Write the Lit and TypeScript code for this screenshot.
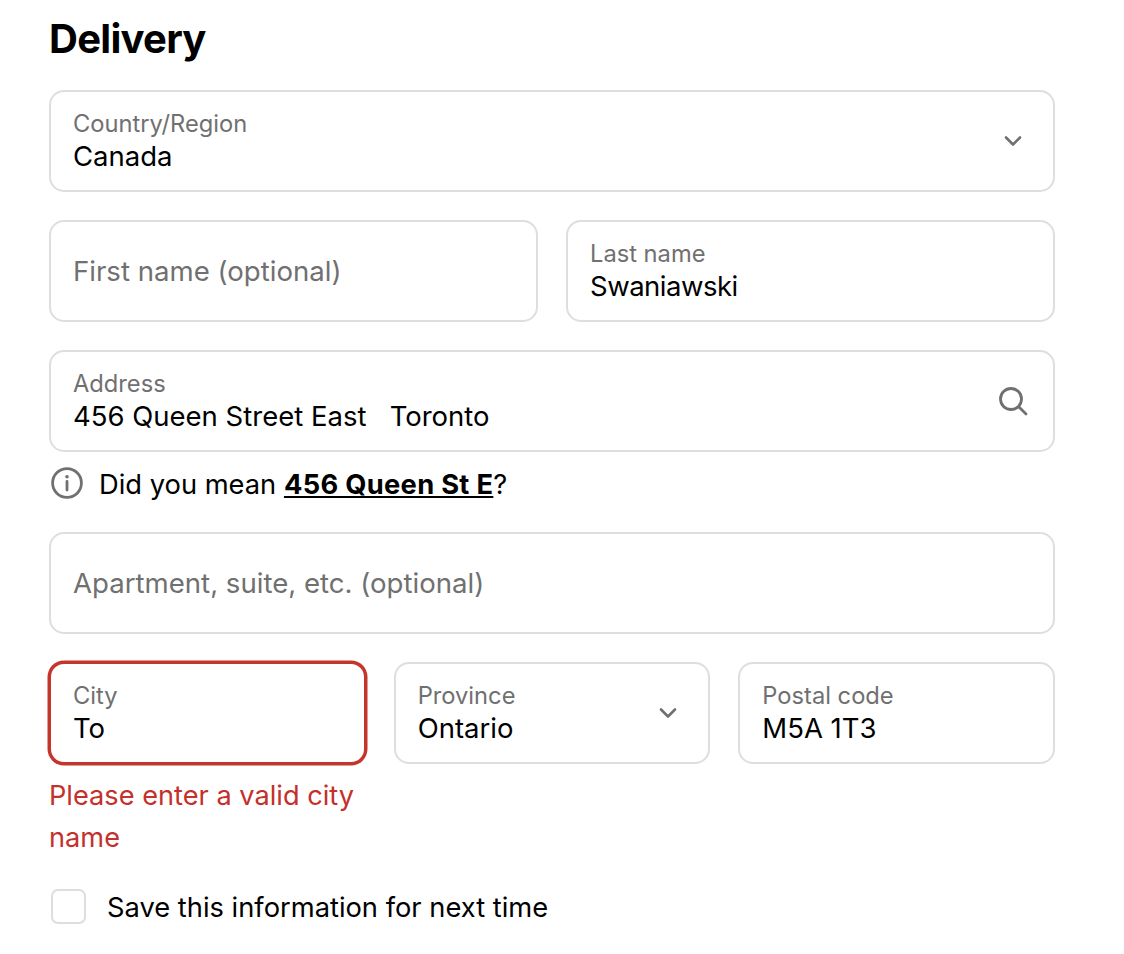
import { LitElement, html, css } from "lit";
import { customElement, property } from "lit/decorators.js";

const chevron = html`<svg class="icon chevron" viewBox="0 0 20 12" fill="none">
	<path d="M3 2.5l7 7 7-7" stroke="#707070" stroke-width="2.6" stroke-linecap="round" stroke-linejoin="round" />
</svg>`;

const search = html`<svg class="icon search" viewBox="0 0 30 30" fill="none">
	<circle cx="13" cy="13" r="10.5" stroke="#707070" stroke-width="2.8" />
	<path d="M21 21l7 7" stroke="#707070" stroke-width="2.8" stroke-linecap="round" />
</svg>`;

@customElement("text-field")
export class TextField extends LitElement {
	@property() label = "";
	@property() value = "";
	@property({ type: Boolean }) error = false;
	@property({ type: Boolean }) tight = false;

	static styles = css`
		:host {
			display: block;
			min-width: 0;
		}

		.box {
			box-sizing: border-box;
			height: 102px;
			border: 2px solid #dedede;
			border-radius: 15px;
			padding: 0 22px;
			display: flex;
			align-items: center;
			justify-content: space-between;
			background: #fff;
		}

		.box.error {
			border-color: #c4362b;
			box-shadow: 0 0 0 1.5px #c4362b;
		}

		.text {
			display: flex;
			flex-direction: column;
			padding-bottom: 2px;
		}

		.label {
			font-size: 23.7px;
			line-height: 33px;
			color: #707070;
		}

		.value {
			font-size: 27.5px;
			line-height: 33px;
			color: #000;
			white-space: pre;
		}

		.value.tight {
			letter-spacing: -0.5px;
		}

		.placeholder {
			font-size: 27.6px;
			line-height: 33px;
			color: #707070;
		}
	`;

	render() {
		return html`
			<div class="box ${this.error ? "error" : ""}">
				${this.value
					? html`<div class="text">
							<span class="label">${this.label}</span>
							<span class="value ${this.tight ? "tight" : ""}">${this.value}</span>
						</div>`
					: html`<span class="placeholder">${this.label}</span>`}
				<slot></slot>
			</div>
		`;
	}
}

@customElement("app-root")
export class AppRoot extends LitElement {
	static styles = css`
		:host {
			display: block;
			box-sizing: border-box;
			width: 1124px;
			height: 954px;
			padding: 13px 69px 0 49px;
			background: #fff;
			color: #000;
			font-family: Inter, "Liberation Sans", sans-serif;
		}

		h2 {
			margin: 0 0 25px;
			font-size: 40px;
			line-height: 52px;
			font-weight: 700;
			letter-spacing: -0.72px;
		}

		.form {
			display: flex;
			flex-direction: column;
			gap: 28px;
		}

		.row {
			display: grid;
			gap: 28px;
		}

		.two {
			grid-template-columns: 1fr 1fr;
		}

		.three {
			grid-template-columns: 1fr 1fr 1fr;
		}

		.with-hint {
			display: flex;
			flex-direction: column;
			gap: 13px;
		}

		.hint {
			display: flex;
			align-items: center;
			gap: 15px;
			padding: 0 0 1px 1px;
			font-size: 27.3px;
			line-height: 36px;
		}

		.hint span {
			padding-top: 2px;
		}

		.hint a {
			color: #000;
			font-weight: 700;
			letter-spacing: 0.3px;
			text-decoration: underline;
		}

		.icon {
			display: block;
			flex: none;
		}

		.chevron {
			width: 20px;
			height: 12px;
			margin-right: 8px;
		}

		.search {
			width: 30px;
			height: 30px;
			margin-right: 3px;
		}

		.info {
			width: 34px;
			height: 34px;
			margin-bottom: 2px;
		}

		.city {
			display: flex;
			flex-direction: column;
			gap: 11px;
		}

		.message {
			font-size: 27.2px;
			line-height: 42px;
			color: #c4302b;
		}

		.save {
			display: flex;
			align-items: center;
			gap: 21px;
			padding-left: 2px;
			font-size: 27.3px;
			line-height: 36px;
			margin-top: 2px;
		}

		.check {
			box-sizing: border-box;
			width: 35px;
			height: 35px;
			margin-bottom: 2px;
			border: 2px solid #dedede;
			border-radius: 7px;
			background: #fff;
		}
	`;

	render() {
		return html`
			<h2>Delivery</h2>
			<div class="form">
				<text-field label="Country/Region" value="Canada">${chevron}</text-field>
				<div class="row two">
					<text-field label="First name (optional)"></text-field>
					<text-field label="Last name" value="Swaniawski" tight></text-field>
				</div>
				<div class="with-hint">
					<text-field label="Address" value="456 Queen Street East   Toronto">${search}</text-field>
					<div class="hint">
						<svg class="icon info" viewBox="0 0 34 34" fill="none">
							<circle cx="17" cy="17" r="14.4" stroke="#707070" stroke-width="2.8" />
							<circle cx="17" cy="10.8" r="1.8" fill="#707070" />
							<path d="M17 15.5v8.5" stroke="#707070" stroke-width="2.8" stroke-linecap="round" />
						</svg>
						<span>Did you mean <a href="#">456 Queen St E</a>?</span>
					</div>
				</div>
				<text-field label="Apartment, suite, etc. (optional)"></text-field>
				<div class="row three">
					<div class="city">
						<text-field label="City" value="To" error></text-field>
						<div class="message">Please enter a valid city name</div>
					</div>
					<text-field label="Province" value="Ontario">${chevron}</text-field>
					<text-field label="Postal code" value="M5A 1T3"></text-field>
				</div>
				<label class="save">
					<span class="check"></span>
					<span>Save this information for next time</span>
				</label>
			</div>
		`;
	}
}
